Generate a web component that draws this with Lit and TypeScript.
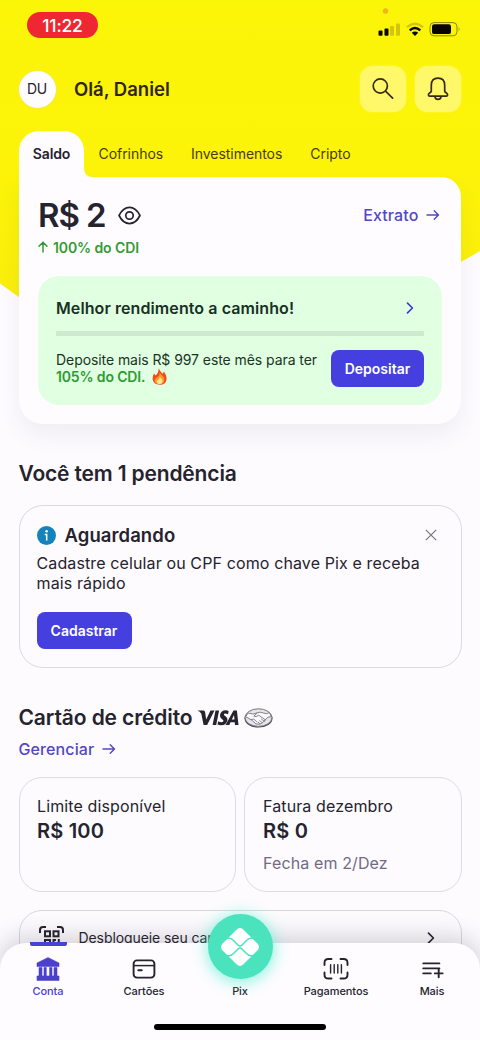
import { LitElement, html, css, svg } from "lit";
import { customElement } from "lit/decorators.js";

const arrow = html`<svg class="arrow" width="14" height="12" viewBox="0 0 14 12"><path d="M1 6H12.4M8.2 1.7L12.5 6L8.2 10.3" fill="none" stroke="currentColor" stroke-width="1.4" stroke-linecap="round" stroke-linejoin="round"/></svg>`;
const chevron = html`<svg width="8" height="12" viewBox="0 0 8 12"><path d="M1.5 1.2L6.4 6L1.5 10.8" fill="none" stroke="currentColor" stroke-width="1.7" stroke-linecap="round" stroke-linejoin="round"/></svg>`;

const icons = {
  bank: svg`<path d="M12 0.6L23 6V9.6H1V6Z M3 10.6H6V19H3Z M8 10.6H10.3V19H8Z M13.6 10.6H16V19H13.6Z M18 10.6H21V19H18Z M1 19H23V23.4H1Z" fill="currentColor" stroke="currentColor" stroke-width=".6" stroke-linejoin="round"/>`,
  card: svg`<g fill="none" stroke="currentColor" stroke-width="1.9"><rect x="1.6" y="3.4" width="20.8" height="17.2" rx="3.4"/><path d="M1.6 8.6H22.4" stroke-width="1.5"/><path d="M6.3 13.3H9.8" stroke-linecap="round"/></g>`,
  barcode: svg`<g fill="none" stroke="currentColor" stroke-width="1.9" stroke-linecap="round"><path d="M.5 8V5.8Q.5 2 4.3 2H7.5M16.5 2H19.7Q23.5 2 23.5 5.8V8M23.5 15.5V17.7Q23.5 21.5 19.7 21.5H16.5M7.5 21.5H4.3Q.5 21.5 .5 17.7V15.5"/><path stroke-width="1.4" d="M6.6 7.6V16M10.2 7.6V16M13.8 7.6V16M17.4 7.6V16"/></g>`,
  more: svg`<path d="M3.3 6.4H19.4M3.3 11.4H19.4M3.3 16.4H10.8M18.7 12.6V20.2M14.8 16.4H22.6" fill="none" stroke="currentColor" stroke-width="1.9" stroke-linecap="round"/>`,
};

@customElement("app-root")
export class AppRoot extends LitElement {
  static styles = css`
    :host { display: block; position: relative; width: 480px; height: 1040px; overflow: hidden; background: #fdfbfe; color: #25232e; font-family: Inter, sans-serif; }
    * { box-sizing: border-box; }
    svg { display: block; overflow: visible; flex: none; }
    .hero { position: absolute; left: 0; top: 0; width: 480px; height: 420px; }
    .page { position: relative; height: 1040px; overflow: hidden; }
    .status { height: 66px; padding: 12px 20px 0 27px; display: flex; justify-content: space-between; align-items: flex-start; }
    .time { width: 71px; height: 26px; border-radius: 13px; background: #ee2732; color: #fff; font-size: 17.5px; font-weight: 500; line-height: 27px; text-align: center; letter-spacing: -.2px; }
    .header { height: 46px; padding: 0 19px 0 18.5px; display: flex; align-items: center; gap: 9px; }
    .avatar { width: 37px; height: 37px; border-radius: 50%; background: #fefcff; text-align: center; line-height: 36px; font-size: 14px; letter-spacing: -.2px; box-shadow: 0 0 2px #e9dd9b; }
    .hello { flex: 1; margin: -1px 0 0 9.5px; font-size: 18.5px; font-weight: 600; letter-spacing: 0; color: #2f2619; }
    .round { width: 46px; height: 46px; border-radius: 13px; background: #fff86b; display: grid; place-items: center; color: #392912; box-shadow: 0 0 2px #fff86b; }
    .tabs { height: 46px; margin: 19px 19px 0; display: flex; align-items: flex-start; font-size: 14px; line-height: 45px; letter-spacing: -.05px; color: #493c12; }
    .tab { position: relative; width: 65px; height: 46px; text-align: center; font-size: 14px; font-weight: 600; letter-spacing: -.1px; color: #25232e; background: #fefcff; border-radius: 20px 20px 0 0; }
    .fillet { position: absolute; left: 65px; bottom: 0; }
    .tabs span { margin-left: 28px; }
    .tabs .first { margin-left: 14.5px; }
    .balance { height: 247px; margin: 0 19px; padding: 18px 19px 19px; background: #fefcff; border-radius: 0 20px 24px 24px; box-shadow: 0 12px 22px #504a6012; }
    .row { display: flex; align-items: center; justify-content: space-between; }
    .amount { height: 40px; display: flex; align-items: center; gap: 13px; font-size: 33px; font-weight: 600; letter-spacing: -1.1px; }
    .link { display: flex; align-items: center; gap: 7.5px; color: #5148c5; font-size: 16px; font-weight: 500; letter-spacing: .12px; }
    .row .link { padding-right: 2px; }
    .rate { height: 18px; margin: 3px 0 20px; display: flex; align-items: center; gap: 5px; color: #349b34; font-size: 14px; font-weight: 600; letter-spacing: -.1px; }
    .promo { height: 129px; padding: 20px 18px 18px; border-radius: 21px; background: #e1ffe1; color: #193326; }
    .promo .row { height: 24px; color: #433bd0; padding-right: 10px; }
    .promo h3 { margin: 0; font-size: 16px; font-weight: 600; letter-spacing: .09px; color: #183025; }
    .bar { height: 5px; margin: 11px 0 13.5px; background: #cfe8d0; border-radius: 1px; }
    .deposit { display: flex; justify-content: space-between; }
    .deposit p { margin: 1px 0 0; font-size: 14px; line-height: 17.5px; letter-spacing: -.07px; white-space: nowrap; }
    .deposit b { display: flex; align-items: center; gap: 7px; height: 17.5px; font-weight: 600; letter-spacing: -.15px; color: #2c9b31; }
    .button { height: 37px; border-radius: 8px; background: #453fdf; color: #fff; font-size: 14px; line-height: 38px; font-weight: 600; text-align: center; }
    .deposit .button { width: 93px; }
    h2 { margin: 0; font-size: 21px; line-height: 28px; font-weight: 600; letter-spacing: -.16px; }
    .section { padding: 0 18.5px; }
    .pending { margin-top: 36px; }
    .alert { height: 163px; margin-top: 17px; padding: 17px 17px; border: 1.5px solid #dcd9e3; border-radius: 24px; }
    .alert .row { height: 24px; justify-content: flex-start; gap: 9px; font-size: 18.5px; font-weight: 600; letter-spacing: .08px; padding-right: 7px; }
    .grow { flex: 1; }
    .alert p { margin: 6px 0 18.5px; font-size: 16px; line-height: 20px; letter-spacing: .12px; white-space: nowrap; }
    .alert .button { width: 95px; }
    .credit { margin-top: 36px; }
    .title { display: flex; align-items: center; gap: 5px; }
    .title h2 { letter-spacing: -.11px; }
    .manage { height: 24px; margin: 5px 0 16px; }
    .cards { display: grid; grid-template-columns: 217.5px 217.5px; gap: 8px; }
    .card { height: 115px; border: 1.3px solid #dedbe3; border-radius: 23px; padding: 17.5px 17.5px; font-size: 16px; line-height: 21px; letter-spacing: .12px; }
    .card + .card { padding-left: 18px; }
    .card strong { display: block; font-size: 20px; line-height: 28px; font-weight: 600; letter-spacing: .2px; }
    .card em { display: block; margin-top: 8px; font-style: normal; color: #706a83; }
    .unlock { height: 80px; margin-top: 17.5px; border: 1.3px solid #d9d6df; border-radius: 23px; padding: 15px 26px 0 19px; display: flex; align-items: flex-start; font-size: 14px; line-height: 24px; letter-spacing: -.08px; }
    .unlock span { flex: 1; margin-left: 15px; }
    .unlock .chev { margin-top: 6px; }
    .nav { position: absolute; left: 0; right: 0; bottom: 0; height: 97px; background: #fefcff; border-radius: 26px 26px 0 0; box-shadow: 0 -5px 24px #302c4638; }
    .items { display: grid; grid-template-columns: repeat(5, 96px); height: 60px; }
    .item { display: flex; flex-direction: column; align-items: center; padding-top: 14px; font-size: 11px; line-height: 14px; font-weight: 500; letter-spacing: -.07px; }
    .item div { margin-top: 3px; }
    .active { color: #4a40cc; }
    .marker { position: absolute; left: 30px; top: -1px; width: 37px; height: 4px; border-radius: 0 0 2px 2px; background: #4941d4; }
    .pix { position: absolute; left: 207.5px; top: -29px; width: 65px; height: 65px; border-radius: 50%; background: #4be3be; display: grid; place-items: center; box-shadow: 0 2px 15px 1px #4bf0d0b0; }
    .home { position: absolute; left: 154px; bottom: 10px; width: 172px; height: 6px; border-radius: 3px; background: #000; }
  `;

  render() {
    return html`
      <svg class="hero" viewBox="0 0 480 420">
        <defs><linearGradient id="sun" x2="0" y2="1"><stop offset="0" stop-color="#fbf508"/><stop offset=".45" stop-color="#fcf309"/><stop offset=".8" stop-color="#faee0b"/></linearGradient></defs>
        <path d="M0 0H480V251L250 384Q225 398 150 392L0 283.5Z" fill="url(#sun)"/>
        <circle cx="385.5" cy="11" r="2.7" fill="#f4b31a"/>
      </svg>
      <div class="page">
        <div class="status">
          <div class="time">11:22</div>
          <svg width="83" height="26" viewBox="0 0 83 26">
            <g fill="#080600"><rect x="1.5" y="18.5" width="4" height="5.3" rx="1"/><rect x="7.5" y="16.5" width="4" height="7.3" rx="1"/></g>
            <g fill="#d3c608"><rect x="13" y="14" width="4" height="9.8" rx="1"/><rect x="19" y="11.5" width="4" height="12.3" rx="1"/></g>
            <g fill="none" stroke-width="2.4"><path d="M30 15.2Q38 8.5 46 15.2" stroke="#d3c608"/><path d="M32.7 18.4Q38 13.8 43.3 18.4" stroke="#080600"/></g>
            <path d="M34.8 20.7Q38 18.3 41.2 20.7L38 24Z" fill="#080600"/>
            <rect x="53" y="10.6" width="27" height="13.2" rx="4" fill="none" stroke="#8d8508"/>
            <rect x="55" y="12.3" width="19" height="9.8" rx="2.2" fill="#080600"/><path d="M81.7 15Q83.5 17.2 81.7 19.4Z" fill="#8d8508"/>
          </svg>
        </div>
        <div class="header">
          <div class="avatar">DU</div>
          <div class="hello">Olá, Daniel</div>
          <div class="round"><svg width="24" height="24" viewBox="0 0 24 24"><g fill="none" stroke="currentColor" stroke-width="1.7" stroke-linecap="round"><circle cx="9.3" cy="9" r="7.1"/><path d="M14.5 14.2L21.6 21.2"/></g></svg></div>
          <div class="round"><svg width="24" height="24" viewBox="0 0 24 24"><path d="M5.3 14V8.3Q5.3 1.2 12 1.2Q18.7 1.2 18.7 8.3V14Q18.9 15.2 20.4 16Q21.6 16.8 21.6 18Q21.5 19.2 20.2 19.2H3.8Q2.5 19.2 2.4 18Q2.4 16.8 3.6 16Q5.1 15.2 5.3 14ZM9 19.5Q9 22.3 12 22.3Q15 22.3 15 19.5" fill="none" stroke="currentColor" stroke-width="1.7" stroke-linejoin="round"/></svg></div>
        </div>
        <div class="tabs">
          <div class="tab">Saldo<svg class="fillet" width="9" height="9" viewBox="0 0 9 9"><path d="M0 0Q0 9 9 9H0Z" fill="#fefcff"/></svg></div>
          <span class="first">Cofrinhos</span><span>Investimentos</span><span>Cripto</span>
        </div>
        <div class="balance">
          <div class="row">
            <div class="amount">R$ 2<svg width="23" height="19" viewBox="0 0 24 20"><g fill="none" stroke="currentColor" stroke-width="1.8" stroke-linejoin="round"><path d="M1 10Q5.2 1.5 12 1.5Q18.8 1.5 23 10Q18.8 18.5 12 18.5Q5.2 18.5 1 10Z"/><circle cx="12" cy="10" r="3.9"/></g></svg></div>
            <div class="link">Extrato ${arrow}</div>
          </div>
          <div class="rate"><svg width="10" height="12" viewBox="0 0 10 12"><path d="M5 11V1.3M1 5.3L5 1.2L9 5.3" fill="none" stroke="currentColor" stroke-width="1.5" stroke-linecap="round" stroke-linejoin="round"/></svg>100% do CDI</div>
          <div class="promo">
            <div class="row"><h3>Melhor rendimento a caminho!</h3>${chevron}</div>
            <div class="bar"></div>
            <div class="deposit">
              <p>Deposite mais R$ 997 este mês para ter<b>105% do CDI. <svg width="15" height="17" viewBox="0 0 15 17"><path d="M6.6.2Q8 3 10.5 5.7L12 3.8Q15 8 14.5 11.4Q13.7 16.5 8 16.7Q1 16.7.6 11Q.4 8.2 2 5.6L3.6 7.5Q6.9 4.5 6.6.2Z" fill="#f34b20"/><path d="M7.7 4.7Q11.5 8.3 12.2 10.5Q12.8 16 7.8 16.2Q2.7 16 2.5 11.7L4.5 9.5Q8 8.2 7.7 4.7Z" fill="#ff9c24"/><path d="M8 9Q11 12 10.5 14Q9.8 16 7.7 16Q4.8 15.8 4.8 13Q7.4 11.8 8 9Z" fill="#ffe59a"/></svg></b></p>
              <div class="button">Depositar</div>
            </div>
          </div>
        </div>
        <div class="section pending">
          <h2>Você tem 1 pendência</h2>
          <div class="alert">
            <div class="row">
              <svg width="19" height="19" viewBox="0 0 19 19"><circle cx="9.5" cy="9.5" r="9.5" fill="#1583bb"/><circle cx="9.6" cy="5.3" r="1.2" fill="#fff"/><path d="M7.7 8.4H9.7V14.6" fill="none" stroke="#fff" stroke-width="1.5"/></svg>
              <div class="grow">Aguardando</div>
              <svg width="12" height="12" viewBox="0 0 12 12"><path d="M.8.8L11.2 11.2M11.2.8L.8 11.2" stroke="#777580" stroke-width="1.2"/></svg>
            </div>
            <p>Cadastre celular ou CPF como chave Pix e receba<br>mais rápido</p>
            <div class="button">Cadastrar</div>
          </div>
        </div>
        <div class="section credit">
          <div class="title"><h2>Cartão de crédito</h2>
            <svg width="42" height="16" viewBox="0 0 41 16"><path d="M0 .6H6Q7.4.8 7.6 2.3L8.7 9.5L13 .6H17L9.6 15H6.1L3.8 3.8Q2.5 1.6 0 .6ZM18 .6H21.6L18.7 15H15.1ZM31.2 1.2L30.5 4.2Q27 2.7 26.4 4.3Q26.2 5.1 28 6.2Q30.4 7.6 29.9 10.2Q28.9 15.2 23.6 15.2Q21.5 15.2 20 14.5L20.7 11.3Q24.5 13.1 25.9 11.3Q26.5 10.3 24.3 9Q22 7.5 22.5 5.1Q23.4.3 28.3.3Q30 .3 31.2 1.2ZM36 .6H39.4L41 15H37.5L37.2 12.2H33L31.8 15H28ZM36.5 5L34.3 9.6H37Z" fill="#25232e"/></svg>
            <svg width="29" height="20" viewBox="0 0 29 20"><ellipse cx="14.5" cy="10.5" rx="14" ry="9.1" fill="#4a4952"/><ellipse cx="14.5" cy="9.6" rx="13.4" ry="8.8" fill="#e7e5e9" stroke="#77757d"/><path d="M4.2 5Q9.5 7.2 13.3 4.8Q16 3.4 19.2 5Q22.8 6.4 25.5 4.6L27.2 8.7Q23.5 8.6 22 11L18.4 14.8L15.8 16.2L12 15.9L7.6 12L1.7 8.7Z" fill="#faf8fc" stroke="#77757d" stroke-width=".9"/><path d="M13.3 4.8L9.8 8.2Q12 9.4 14.7 7.2L22 12.3M18.4 14.8L15.5 12.5M16.2 16L13.8 13.8M20.7 13.7L17.2 10.9M6.7 11.8L9.4 11L11.4 12.4L12.9 14.1" fill="none" stroke="#77757d" stroke-width=".9"/></svg>
          </div>
          <div class="link manage">Gerenciar ${arrow}</div>
          <div class="cards">
            <div class="card">Limite disponível<strong>R$ 100</strong></div>
            <div class="card">Fatura dezembro<strong>R$ 0</strong><em>Fecha em 2/Dez</em></div>
          </div>
          <div class="unlock">
            <svg width="25" height="25" viewBox="0 0 25 25"><g fill="none" stroke="currentColor" stroke-width="2"><path d="M1 7V4Q1 1 4 1H7M18 1H21Q24 1 24 4V7"/><rect x="6" y="5.3" width="5" height="5"/><rect x="14.5" y="5.3" width="5" height="5"/><rect x="6" y="14" width="5" height="5"/><path d="M14.5 17V14H17M19.8 13V17"/></g></svg>
            <span>Desbloqueie seu cartão</span><div class="chev">${chevron}</div>
          </div>
        </div>
      </div>
      <div class="nav">
        <div class="marker"></div>
        <div class="items">
          <div class="item active"><svg width="24" height="24" viewBox="0 0 24 24">${icons.bank}</svg><div>Conta</div></div>
          <div class="item"><svg width="24" height="24" viewBox="0 0 24 24">${icons.card}</svg><div>Cartões</div></div>
          <div class="item"><svg width="24" height="24"></svg><div>Pix</div></div>
          <div class="item"><svg width="24" height="24" viewBox="0 0 24 24">${icons.barcode}</svg><div>Pagamentos</div></div>
          <div class="item"><svg width="24" height="24" viewBox="0 0 24 24">${icons.more}</svg><div>Mais</div></div>
        </div>
        <div class="pix"><svg width="38" height="38" viewBox="0 0 38 38"><path d="M15.8 1.4Q19-1.4 22.2 1.4L36.6 15.8Q39.4 19 36.6 22.2L22.2 36.6Q19 39.4 15.8 36.6L1.4 22.2Q-1.4 19 1.4 15.8Z" fill="#fff"/><path d="M4 10.3H8Q10.3 10.3 12 12L17 17Q19 19 21 17L26 12Q27.7 10.3 30 10.3H34M4 27.7H8Q10.3 27.7 12 26L17 21Q19 19 21 21L26 26Q27.7 27.7 30 27.7H34" fill="none" stroke="#4be3be" stroke-width="1.5"/></svg></div>
        <div class="home"></div>
      </div>
    `;
  }
}
